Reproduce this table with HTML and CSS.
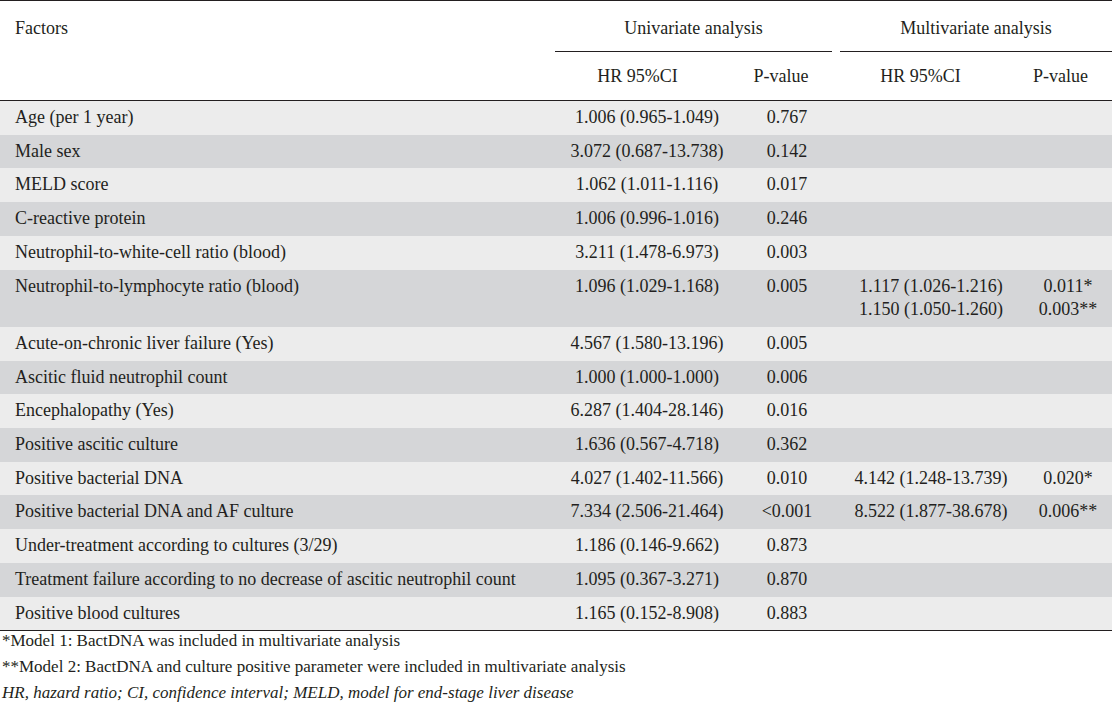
FILE: index.html
```html
<!DOCTYPE html>
<html lang="en">
<head>
<meta charset="utf-8">
<title>Cox regression table</title>
<link rel="stylesheet" href="styles.css">
</head>
<body>
<div class="wrap">
<table class="tbl">
  <colgroup>
    <col class="c1"><col class="c2"><col class="c3"><col class="c4"><col class="c5">
  </colgroup>
  <thead>
    <tr class="h1">
      <th class="factors" rowspan="2">Factors</th>
      <th class="grp uni" colspan="2"><div class="grp-in">Univariate analysis</div></th>
      <th class="grp multi" colspan="2"><div class="grp-in">Multivariate analysis</div></th>
    </tr>
    <tr class="h2">
      <th class="hr-u">HR 95%CI</th>
      <th class="p-u">P-value</th>
      <th class="hr-m">HR 95%CI</th>
      <th class="p-m">P-value</th>
    </tr>
  </thead>
  <tbody>
    <tr class="odd"><td class="f">Age (per 1 year)</td><td class="hr-u">1.006 (0.965-1.049)</td><td class="p-u">0.767</td><td class="hr-m"></td><td class="p-m"></td></tr>
    <tr class="even"><td class="f">Male sex</td><td class="hr-u">3.072 (0.687-13.738)</td><td class="p-u">0.142</td><td class="hr-m"></td><td class="p-m"></td></tr>
    <tr class="odd"><td class="f">MELD score</td><td class="hr-u">1.062 (1.011-1.116)</td><td class="p-u">0.017</td><td class="hr-m"></td><td class="p-m"></td></tr>
    <tr class="even"><td class="f">C-reactive protein</td><td class="hr-u">1.006 (0.996-1.016)</td><td class="p-u">0.246</td><td class="hr-m"></td><td class="p-m"></td></tr>
    <tr class="odd"><td class="f">Neutrophil-to-white-cell ratio (blood)</td><td class="hr-u">3.211 (1.478-6.973)</td><td class="p-u">0.003</td><td class="hr-m"></td><td class="p-m"></td></tr>
    <tr class="even"><td class="f">Neutrophil-to-lymphocyte ratio (blood)</td><td class="hr-u">1.096 (1.029-1.168)</td><td class="p-u">0.005</td><td class="hr-m">1.117 (1.026-1.216)<br>1.150 (1.050-1.260)</td><td class="p-m">0.011*<br>0.003**</td></tr>
    <tr class="odd"><td class="f">Acute-on-chronic liver failure (Yes)</td><td class="hr-u">4.567 (1.580-13.196)</td><td class="p-u">0.005</td><td class="hr-m"></td><td class="p-m"></td></tr>
    <tr class="even"><td class="f">Ascitic fluid neutrophil count</td><td class="hr-u">1.000 (1.000-1.000)</td><td class="p-u">0.006</td><td class="hr-m"></td><td class="p-m"></td></tr>
    <tr class="odd"><td class="f">Encephalopathy (Yes)</td><td class="hr-u">6.287 (1.404-28.146)</td><td class="p-u">0.016</td><td class="hr-m"></td><td class="p-m"></td></tr>
    <tr class="even"><td class="f">Positive ascitic culture</td><td class="hr-u">1.636 (0.567-4.718)</td><td class="p-u">0.362</td><td class="hr-m"></td><td class="p-m"></td></tr>
    <tr class="odd"><td class="f">Positive bacterial DNA</td><td class="hr-u">4.027 (1.402-11.566)</td><td class="p-u">0.010</td><td class="hr-m">4.142 (1.248-13.739)</td><td class="p-m">0.020*</td></tr>
    <tr class="even"><td class="f">Positive bacterial DNA and AF culture</td><td class="hr-u">7.334 (2.506-21.464)</td><td class="p-u">&lt;0.001</td><td class="hr-m">8.522 (1.877-38.678)</td><td class="p-m">0.006**</td></tr>
    <tr class="odd"><td class="f">Under-treatment according to cultures (3/29)</td><td class="hr-u">1.186 (0.146-9.662)</td><td class="p-u">0.873</td><td class="hr-m"></td><td class="p-m"></td></tr>
    <tr class="even"><td class="f">Treatment failure according to no decrease of ascitic neutrophil count</td><td class="hr-u">1.095 (0.367-3.271)</td><td class="p-u">0.870</td><td class="hr-m"></td><td class="p-m"></td></tr>
    <tr class="odd"><td class="f">Positive blood cultures</td><td class="hr-u">1.165 (0.152-8.908)</td><td class="p-u">0.883</td><td class="hr-m"></td><td class="p-m"></td></tr>
  </tbody>
</table>
<div class="notes">
  <p class="note">*Model 1: BactDNA was included in multivariate analysis</p>
  <p class="note">**Model 2: BactDNA and culture positive parameter were included in multivariate analysis</p>
  <p class="note abbr">HR, hazard ratio; CI, confidence interval; MELD, model for end-stage liver disease</p>
</div>
</div>
</body>
</html>
```

FILE: styles.css
```css
html, body {
  margin: 0;
  padding: 0;
  background: #ffffff;
}

.wrap {
  width: 1112px;
  font-family: "Liberation Serif", "Times New Roman", serif;
  font-size: 18px;
  color: #231f20;
}

.tbl {
  width: 1112px;
  border-collapse: collapse;
  table-layout: fixed;
  border-top: 1px solid #231f20;
  border-bottom: 1px solid #231f20;
}

.c1 { width: 545px; }
.c2 { width: 185px; }
.c3 { width: 102px; }
.c4 { width: 177px; }
.c5 { width: 103px; }

th {
  font-weight: normal;
  line-height: 24px;
  white-space: nowrap;
}

.tbl thead {
  border-bottom: 1px solid #231f20;
}

.factors {
  text-align: left;
  vertical-align: top;
  padding: 15px 0 0 15px;
}

.h1 .grp {
  padding: 0;
  vertical-align: top;
}

.grp-in {
  padding: 15px 0 11px 0;
  border-bottom: 1px solid #231f20;
  text-align: center;
}

.uni .grp-in {
  margin-left: 10px;
}

.multi .grp-in {
  margin-left: 8px;
}

.h2 th {
  padding: 12px 0 12px 0;
}

td {
  line-height: 23.7px;
  padding: 5px 0;
  vertical-align: top;
  white-space: nowrap;
}

.odd { background: #ececec; }
.even { background: #d5d6d8; }

.f {
  text-align: left;
  padding-left: 15px;
}

.hr-u {
  text-align: center;
  padding-left: 19px;
}

.p-u {
  text-align: center;
  padding-left: 12px;
}

.hr-m {
  text-align: center;
  padding-left: 21px;
}

.p-m {
  text-align: center;
  padding-left: 15px;
}

.notes {
  margin-top: -3px;
  padding-left: 2px;
}

.note {
  margin: 0;
  line-height: 26px;
  font-size: 17px;
}

.abbr {
  font-style: italic;
}
```
